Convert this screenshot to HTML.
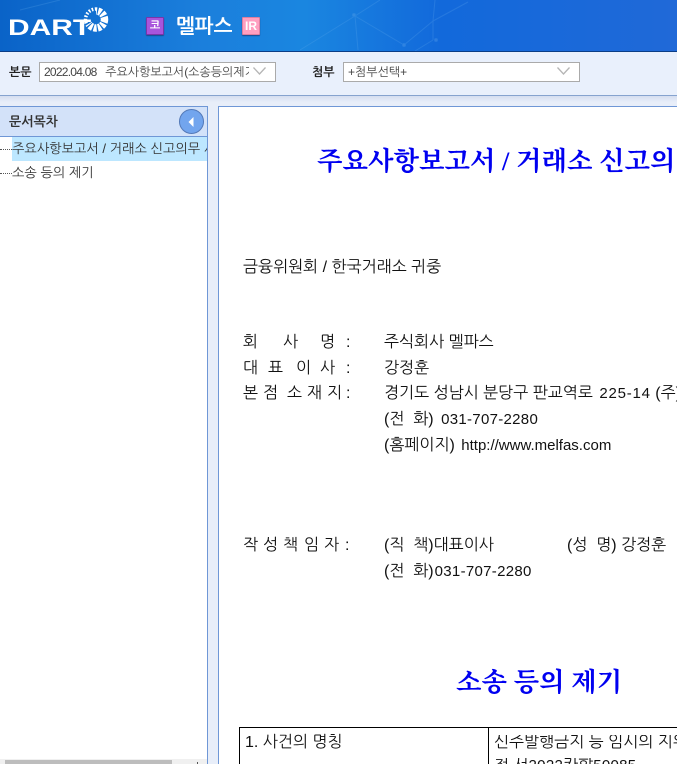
<!DOCTYPE html>
<html lang="ko"><head><meta charset="utf-8"><style>
*{box-sizing:border-box}
html,body{margin:0;padding:0;width:677px;height:764px;overflow:hidden;background:#e8eef9}
body{position:relative;font-family:"Liberation Sans","NanumGothic","Noto Sans CJK KR",sans-serif;color:#222}
.a{position:absolute;white-space:pre;line-height:1}
.t{font-size:16px;color:#111;margin-top:2px}
.l{font-size:15px;margin-left:2px}
.n{font-size:15px;letter-spacing:.3px}
.h{font-family:"Liberation Serif","Noto Serif CJK SC",serif;font-weight:bold;color:#0000f0;font-size:26.4px;margin-top:2px}
.sel{position:absolute;top:62px;height:20px;background:#fff;border:1px solid #aaa}
.st{position:absolute;left:4px;top:0;width:205px;overflow:hidden;font-size:12px;line-height:18px;color:#444;white-space:pre}
</style></head><body>
<div class="a" style="left:0;top:0;width:677px;height:52px;background:linear-gradient(90deg,#0a63c8 0,#1b7fdc 30%,#1a86e0 45%,#1269db 65%,#2069d8 100%);border-bottom:1px solid #0b3d86"></div>
<svg class="a" style="left:0;top:0" width="677" height="51" fill="none" stroke="#6ab0ee" stroke-width="1" opacity=".22"><path d="M355 16L300 50M355 16L358 50M355 16L404 45M355 16L380 0M433 21L404 45M433 21L468 2M433 21L435 0M433 40L415 51M433 21L433 40M20 10L60 0"/><circle cx="354" cy="15" r="1.5" fill="#9ccbf5"/><circle cx="404" cy="45" r="1.5" fill="#9ccbf5"/><circle cx="436" cy="40" r="1.5" fill="#9ccbf5"/></svg>
<div class="a" style="left:8px;top:15px;font:bold 22px 'Liberation Sans',sans-serif;color:#fff;transform:scaleX(1.36);transform-origin:left">DART</div>
<svg class="a" style="left:80px;top:3px" width="32" height="32" fill="none" stroke="#fff"><defs><clipPath id="r"><path d="M16 16L16 0H32V32H4L4 24Z"/></clipPath><clipPath id="s"><path d="M16 16L16 0H0V24H4Z"/></clipPath></defs><circle cx="16" cy="16.5" r="8.5" stroke-width="7.5" stroke-dasharray="3 1.2" clip-path="url(#r)"/><circle cx="16" cy="16.5" r="10.5" stroke-width="3.5" stroke-dasharray="1.6 1.6" clip-path="url(#s)"/></svg>
<div class="a" style="left:146px;top:17px;width:18px;height:18px;background:#a855dc;border:1px solid #7b35a8;border-radius:1px;color:#fff;font-size:11px;font-weight:bold;line-height:16px;text-align:center;box-shadow:0 1px 1px #1a4a90">코</div>
<div class="a" style="left:176px;top:17px;font-size:20px;font-weight:bold;color:#fff">멜파스</div>
<div class="a" style="left:242px;top:17px;width:18px;height:18px;background:#ff9fc0;border:1px solid #dd7f9f;border-radius:1px;color:#fff;font-size:12px;font-weight:bold;line-height:16px;text-align:center;box-shadow:0 1px 1px #1a4a90">IR</div>

<div class="a" style="left:0;top:52px;width:677px;height:44px;background:#e9f0fc;border-bottom:1px solid #86a3cf"></div>
<div class="a" style="left:0;top:96px;width:677px;height:6px;background:linear-gradient(#d5def0,#e8eef9)"></div>
<div class="a" style="left:9px;top:66px;font-size:12px;font-weight:bold;color:#222">본문</div>
<div class="sel" style="left:39px;width:237px"><div class="st"><span style="letter-spacing:-.75px;margin-right:2px">2022.04.08</span>  주요사항보고서(소송등의제기</div></div>
<svg class="a" style="left:252px;top:66px" width="15" height="10" fill="none" stroke="#b5b5b5" stroke-width="1.3"><path d="M1.5 1.5L7.5 8L13.5 1.5"/></svg>
<div class="a" style="left:312px;top:66px;font-size:12px;font-weight:bold;color:#222">첨부</div>
<div class="sel" style="left:343px;width:237px"><div class="st">+첨부선택+</div></div>
<svg class="a" style="left:556px;top:66px" width="15" height="10" fill="none" stroke="#b5b5b5" stroke-width="1.3"><path d="M1.5 1.5L7.5 8L13.5 1.5"/></svg>

<div class="a" style="left:0;top:106px;width:208px;height:658px;background:#fff;border-top:1px solid #6f97d6;border-right:1px solid #6f97d6"></div>
<div class="a" style="left:0;top:107px;width:207px;height:30px;background:#d3e2f9;border-bottom:1px solid #6f97d6"></div>
<div class="a" style="left:9px;top:115px;font-size:13px;font-weight:bold;color:#333">문서목차</div>
<div class="a" style="left:179px;top:109px;width:25px;height:25px;border-radius:50%;background:#72a5ee;border:1px solid #5379b8"></div>
<svg class="a" style="left:187px;top:116px" width="9" height="12"><path d="M6.5 1L1.5 6L6.5 11Z" fill="#fff"/></svg>
<div class="a" style="left:12px;top:137px;width:195px;height:24px;background:#bde7ff"></div>
<div class="a" style="left:0;top:149px;width:12px;border-top:1px dotted #555"></div>
<div class="a" style="left:0;top:173px;width:12px;border-top:1px dotted #555"></div>
<div class="a" style="left:12px;top:142px;width:195px;overflow:hidden;font-size:13.2px;color:#333">주요사항보고서 / 거래소 신고의무 사항</div>
<div class="a" style="left:12px;top:166px;font-size:13.2px;color:#333">소송 등의 제기</div>
<div class="a" style="left:0;top:759px;width:207px;height:5px;background:#f0f0f0"></div>
<div class="a" style="left:5px;top:760px;width:167px;height:4px;background:#bdbdbd"></div>
<div class="a" style="left:197px;top:762px;width:1px;height:2px;background:#555"></div>

<div class="a" style="left:218px;top:106px;width:459px;height:658px;background:#fff;border-top:1px solid #6f97d6;border-left:1px solid #6f97d6"></div>
<div class="a h" style="left:317px;top:146px">주요사항보고서 / 거래소 신고의</div>
<div class="a t" style="left:243px;top:258px">금융위원회 / 한국거래소 귀중</div>
<div class="a t" style="left:243px;top:333px">회</div><div class="a t" style="left:283px;top:333px">사</div><div class="a t" style="left:320px;top:333px">명</div><div class="a t" style="left:346px;top:333px">:</div>
<div class="a t" style="left:384px;top:333px">주식회사 멜파스</div>
<div class="a t" style="left:243px;top:359px">대</div><div class="a t" style="left:268px;top:359px">표</div><div class="a t" style="left:296px;top:359px">이</div><div class="a t" style="left:320px;top:359px">사</div><div class="a t" style="left:346px;top:359px">:</div>
<div class="a t" style="left:384px;top:359px">강정훈</div>
<div class="a t" style="left:243px;top:384px">본</div><div class="a t" style="left:263px;top:384px">점</div><div class="a t" style="left:287px;top:384px">소</div><div class="a t" style="left:307px;top:384px">재</div><div class="a t" style="left:327px;top:384px">지</div><div class="a t" style="left:346px;top:384px">:</div>
<div class="a t" style="left:384px;top:384px">경기도 성남시 분당구 판교역로 <span class="n" style="margin-left:2px;letter-spacing:.8px">225-14</span> (주)</div>
<div class="a t" style="left:384px;top:410px">(전  화) <span class="n" style="margin-left:3px">031-707-2280</span></div>
<div class="a t" style="left:384px;top:436px">(홈페이지) <span class="l">http://www.melfas.com</span></div>
<div class="a t" style="left:243px;top:536px">작</div><div class="a t" style="left:263px;top:536px">성</div><div class="a t" style="left:283px;top:536px">책</div><div class="a t" style="left:304px;top:536px">임</div><div class="a t" style="left:324px;top:536px">자</div><div class="a t" style="left:345px;top:536px">:</div>
<div class="a t" style="left:384px;top:536px">(직  책)대표이사</div>
<div class="a t" style="left:567px;top:536px">(성  명) 강정훈</div>
<div class="a t" style="left:384px;top:562px">(전  화)<span class="n" style="margin-left:1px">031-707-2280</span></div>
<div class="a h" style="left:456px;top:667px">소송 등의 제기</div>
<div class="a" style="left:239px;top:727px;width:438px;height:37px;border-top:1px solid #000;border-left:1px solid #000"></div>
<div class="a" style="left:488px;top:727px;width:1px;height:37px;background:#000"></div>
<div class="a t" style="left:245px;top:733px">1. 사건의 명칭</div>
<div class="a t" style="left:494px;top:733px;width:183px;overflow:hidden">신주발행금지 등 임시의 지위</div>
<div class="a t" style="left:494px;top:756px;width:183px;overflow:hidden">청 서<span class="n">2022</span>카합<span class="n">50085</span></div>
</body></html>
